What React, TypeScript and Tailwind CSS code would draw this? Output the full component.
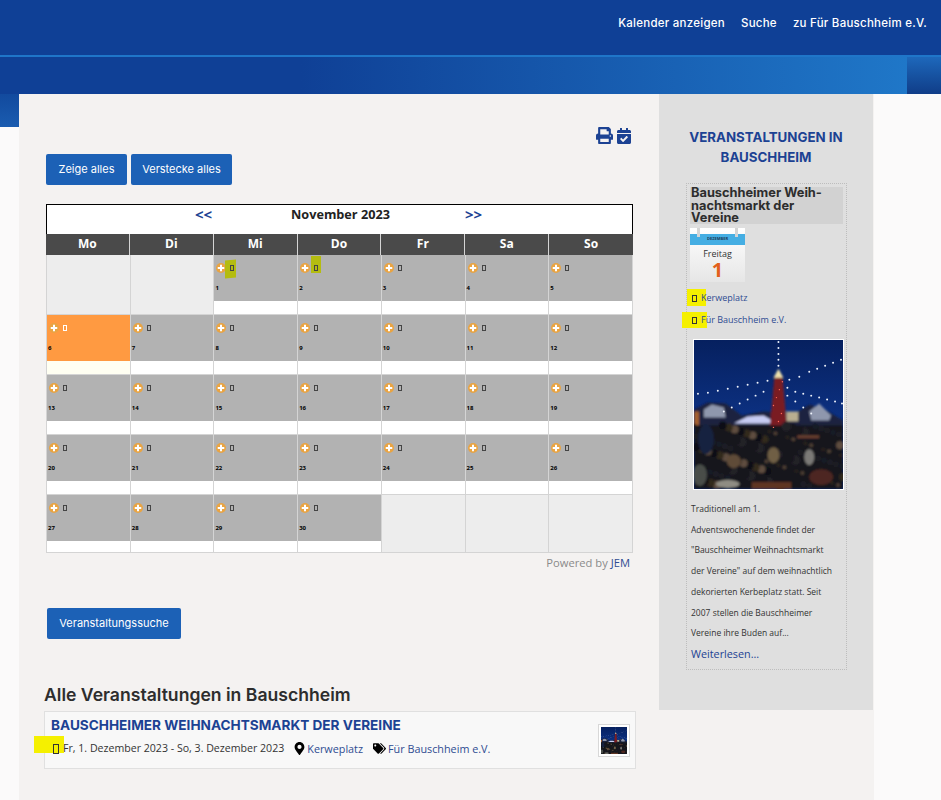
import { FaPrint, FaCalendarCheck, FaMapMarkerAlt, FaTags } from 'react-icons/fa';

const days = ['Mo', 'Di', 'Mi', 'Do', 'Fr', 'Sa', 'So'];
const head = '[font-family:Inter,sans-serif]';
const body = '[font-family:"Open_Sans",sans-serif]';

function Tofu({ className = 'border-black' }: { className?: string }) {
  return <span className={`inline-block border ${className}`} />;
}

function PlusIcon() {
  return (
    <svg viewBox="0 0 20 20" className="h-[10px] w-[10px] shrink-0">
      <circle cx="10" cy="10" r="10" fill="#e9a443" />
      <path d="M10 3.5v13M3.5 10h13" stroke="#fff" strokeWidth="4" />
    </svg>
  );
}

function DayCell({ day, today }: { day?: number; today?: boolean }) {
  if (!day) return <div className="border-r border-b border-[#d4d4d4] bg-[#ededed]" />;
  return (
    <div className={`flex flex-col border-r border-b border-[#d4d4d4] ${today ? 'bg-[#fffff2]' : 'bg-white'}`}>
      <div className={`h-[46px] pl-[1px] ${today ? 'bg-[#ff9a41]' : 'bg-[#b2b2b2]'}`}>
        <div className="flex h-[24px] items-center gap-[4px] pl-[1px] pt-[1px]">
          <PlusIcon />
          <span className="relative flex">
            {day === 1 && <span className="absolute -left-[5px] -top-[5px] h-[18px] w-[11px] -skew-y-6 bg-[#b4bc10]" />}
            {day === 2 && <span className="absolute -left-[3px] -top-[9px] h-[17px] w-[10px] bg-[#b4bc10]" />}
            <Tofu className={`relative h-[6px] w-[4px] ${today ? 'border-white' : 'border-[#444]'}`} />
          </span>
        </div>
        <div className="pt-[5px] text-[6px] leading-[8px] font-bold text-black">{day}</div>
      </div>
    </div>
  );
}

function Calendar() {
  const cells: (number | undefined)[] = [undefined, undefined];
  for (let d = 1; d <= 30; d++) cells.push(d);
  while (cells.length < 35) cells.push(undefined);
  return (
    <div className={`w-[587px] ${body}`}>
      <div className="relative h-[30px] border-x border-t border-black bg-white">
        <a className="absolute left-[148px] top-0 text-[15px] leading-[18px] font-bold text-[#1c4293]">&lt;&lt;</a>
        <div className="absolute left-[244px] top-0 text-[12.7px] leading-[18px] font-bold text-[#222]">November 2023</div>
        <a className="absolute left-[418px] top-0 text-[15px] leading-[18px] font-bold text-[#1c4293]">&gt;&gt;</a>
      </div>
      <div className="grid grid-cols-7">
        {days.map((d) => (
          <div key={d} className="h-[21px] border-r border-[#d4d4d4] bg-[#4a4a4a] text-center text-[12px] leading-[20px] font-bold text-white last:border-r-0">
            {d}
          </div>
        ))}
      </div>
      <div className="grid grid-cols-7 grid-rows-[60px_60px_60px_60px_58px] border-l border-[#d4d4d4]">
        {cells.map((d, i) => (
          <DayCell key={i} day={d} today={d === 6} />
        ))}
      </div>
    </div>
  );
}

const crowdColors = ['#14151b', '#1b1c24', '#101116', '#232028', '#2a241f', '#171a26', '#33291f', '#14151b', '#4f4034', '#1d1e26', '#5e4d3f', '#15161c'];

// small heads and coats for the market photo, spread with fixed steps
const crowd = Array.from({ length: 110 }, (_, i) => ({
  cx: (i * 37) % 151,
  cy: 86 + ((i * 23) % 62),
  r: 2 + (i % 4),
  fill: crowdColors[i % crowdColors.length],
}));

const lights: [number, number][] = [
  [85, 2], [85, 8], [85, 14], [85, 20], [85, 26],
  [4, 54], [14, 53], [24, 51], [34, 49], [44, 47], [54, 45], [64, 43], [74, 41],
  [96, 40], [106, 37], [116, 32], [124, 29], [132, 26], [140, 23], [148, 20],
  [30, 72], [38, 68], [46, 64], [54, 60], [62, 56], [70, 52],
  [94, 48], [102, 52], [110, 54], [118, 56], [126, 58], [134, 60], [142, 62], [149, 64],
  [94, 56], [102, 62], [110, 68], [118, 74],
];

function MarketPhoto({ className }: { className: string }) {
  return (
    <svg viewBox="0 0 150 150" preserveAspectRatio="none" className={className}>
      <defs>
        <linearGradient id="sky" x1="0" y1="0" x2="0" y2="1">
          <stop offset="0" stopColor="#06205f" />
          <stop offset="0.5" stopColor="#0c3080" />
        </linearGradient>
        <filter id="soft" x="-5%" y="-5%" width="110%" height="110%">
          <feGaussianBlur stdDeviation="1.1" />
        </filter>
      </defs>
      <rect width="150" height="150" fill="url(#sky)" />
      <g filter="url(#soft)">
        <path d="M0 70l14-7 18 1 16 12 22-4 32 2 14-9 14 4 20 12v14H0z" fill="#1c2440" />
        <path d="M10 70l8-5 12 3 2 10H10zM116 72l10-8 12 12-2 5h-18z" fill="#8f97ad" />
        <path d="M40 84l14-7 16-1 14 8z" fill="#c6cbf2" />
        <path d="M93 72h12v10H93z" fill="#b8ae90" />
        <path d="M0 72h5v14H0z" fill="#a5602f" />
        <path d="M76 92l5-56h8l5 56z" fill="#7a1d24" />
        <path d="M80 38l5-9 5 9z" fill="#efe3ad" />
        <rect y="86" width="150" height="64" fill="#15161c" />
        {crowd.map((c, i) => (
          <circle key={i} cx={c.cx} cy={c.cy} r={c.r} fill={c.fill} />
        ))}
        <rect x="58" y="143" width="40" height="7" fill="#5e3424" />
        <rect x="104" y="96" width="22" height="3" fill="#6a4030" />
        <ellipse cx="40" cy="122" rx="7" ry="7" fill="#5f4b39" />
        <ellipse cx="80" cy="116" rx="6" ry="8" fill="#6f5e45" />
        <ellipse cx="116" cy="118" rx="5" ry="8" fill="#7c7a77" />
        <ellipse cx="128" cy="138" rx="12" ry="8" fill="#4e2820" />
        <ellipse cx="6" cy="136" rx="7" ry="11" fill="#494e49" />
        <ellipse cx="34" cy="145" rx="12" ry="4" fill="#8f8d83" />
        <ellipse cx="12" cy="100" rx="8" ry="15" fill="#14223f" />
      </g>
      {lights.map(([cx, cy], i) => (
        <circle key={i} cx={cx} cy={cy} r="1" fill="#eef2fb" />
      ))}
      {[42, 50, 58, 66, 74, 82, 88].map((y) => (
        <circle key={y} cx={80 + (y % 11)} cy={y} r="0.7" fill="#ff6a5a" />
      ))}
    </svg>
  );
}

function DateBadge() {
  return (
    <div className={`relative h-[54px] w-[55px] bg-gradient-to-b from-white to-[#e6e6e6] pt-[6px] text-center ${body}`}>
      <div className="h-[11px] bg-[#45aee3] pt-[2px] text-[4px] leading-[6px] font-bold text-[#1b3a57]">DEZEMBER</div>
      <span className="absolute left-[7px] top-0 h-[9px] w-[3px] bg-[#d5d5d5]" />
      <span className="absolute right-[7px] top-0 h-[9px] w-[3px] bg-[#d5d5d5]" />
      <div className="pt-[3px] text-[9px] leading-[12px] text-[#333]">Freitag</div>
      <div className="text-[20px] leading-[20px] font-bold text-[#e2601b]">1</div>
    </div>
  );
}

function Sidebar() {
  return (
    <aside className={`h-[616px] w-[214px] shrink-0 bg-[#dfdfdf] px-[27px] ${body}`}>
      <h3 className={`-mx-[4px] pt-[33px] text-center text-[13.3px] leading-[20px] font-bold text-[#1c4293] ${head}`}>
        VERANSTALTUNGEN IN BAUSCHHEIM
      </h3>
      <div className="mt-[16px] h-[487px] w-[161px] border border-dotted border-[#bdbdbd] px-[3px] pt-[3px]">
        <div className={`h-[37px] bg-[#d2d2d2] pl-[1px] text-[12.8px] leading-[12.5px] font-bold text-[#2d2d2d] ${head}`}>
          Bauschheimer Weih-<br />nachtsmarkt der<br />Vereine
        </div>
        <div className="pt-[4px]"><DateBadge /></div>
        <div className="mt-[9px] flex h-[14px] items-center pl-[2px] text-[9px] text-[#2f4c92]">
          <span className="relative mr-[4px] inline-flex">
            <span className="absolute -left-[5px] -top-[6px] h-[17px] w-[19px] bg-[#f5f000]" />
            <Tofu className="relative h-[7px] w-[5px] border-[#333]" />
          </span>
          <span className="relative">Kerweplatz</span>
        </div>
        <div className="mt-[8px] flex h-[14px] items-center pl-[2px] text-[9px] text-[#2f4c92]">
          <span className="relative mr-[4px] inline-flex">
            <span className="absolute -left-[10px] -top-[5px] h-[16px] w-[25px] bg-[#f5f000]" />
            <Tofu className="relative h-[7px] w-[5px] border-[#333]" />
          </span>
          <span className="relative">Für Bauschheim e.V.</span>
        </div>
        <div className="ml-[3px] mt-[12px] w-[151px] bg-white p-[1px]">
          <MarketPhoto className="block h-[149px] w-[149px]" />
        </div>
        <p className="mt-[9px] pl-[1px] text-[8.5px] leading-[20.7px] text-[#333]">
          Traditionell am 1.<br />
          Adventswochenende findet der<br />
          "Bauschheimer Weihnachtsmarkt<br />
          der Vereine" auf dem weihnachtlich<br />
          dekorierten Kerbeplatz statt. Seit<br />
          2007 stellen die Bauschheimer<br />
          Vereine ihre Buden auf...
        </p>
        <a className="mt-[2px] block pl-[1px] text-[10.8px] leading-[16px] text-[#1c4293]">Weiterlesen...</a>
      </div>
    </aside>
  );
}

export default function App() {
  return (
    <div className={`relative min-h-[800px] overflow-hidden bg-[#fbfafa] ${body}`}>
      <header className={`flex h-[55px] items-start justify-end gap-[16px] bg-[#0f4096] pr-[14px] pt-[16px] text-[11.5px] leading-[14px] font-medium tracking-[0.25px] text-white ${head}`}>
        <span>Kalender anzeigen</span>
        <span>Suche</span>
        <span>zu Für Bauschheim e.V.</span>
      </header>
      <div className="relative h-[39px] border-t-2 border-[#1f76c9] bg-[linear-gradient(90deg,#0f4096_0%,#0f4096_32%,#1f77c8_96.4%)]">
        <div className="absolute right-0 top-0 h-full w-[34px] bg-gradient-to-b from-[#1e68bb] to-[#103d88]" />
      </div>
      <div className="absolute left-0 top-[94px] h-[33px] w-[19px] bg-gradient-to-b from-[#124a9e] to-[#1a5cb0]" />
      <div className="absolute left-[873px] top-[94px] h-[33px] w-px bg-[#7fa6dc]" />

      <main className="relative ml-[19px] flex w-[855px] items-start bg-[#f4f2f1]">
        <div className="h-[706px] w-[640px] pl-[27px]">
          <div className="flex items-center justify-end gap-[3px] pr-[27px] pt-[33px] text-[17px] text-[#1c4293]">
            <FaPrint />
            <FaCalendarCheck className="text-[16px]" />
          </div>
          <div className="mt-[10px] flex gap-[4px]">
            <button className={`h-[31px] w-[81px] rounded-[2px] bg-[#1c61b6] text-[11px] text-white ${head}`}>Zeige alles</button>
            <button className={`h-[31px] w-[101px] rounded-[2px] bg-[#1c61b6] text-[11px] text-white ${head}`}>Verstecke alles</button>
          </div>
          <div className="mt-[19px]"><Calendar /></div>
          <div className="w-[587px] pr-[3px] pt-[2px] text-right text-[11.2px] leading-[15px] text-[#8a8a8a]">
            Powered by <a className="text-[#2f4c92]">JEM</a>
          </div>
          <button className={`ml-[1px] mt-[38px] h-[31px] w-[134px] rounded-[2px] bg-[#1c61b6] text-[11px] text-white ${head}`}>Veranstaltungssuche</button>
          <h2 className={`-ml-[2px] mt-[46px] text-[17.6px] leading-[20px] font-semibold text-[#2d2d2d] ${head}`}>Alle Veranstaltungen in Bauschheim</h2>
          <div className="-ml-[2px] mt-[6px] flex h-[58px] w-[592px] items-start justify-between border border-[#e0e0e0] bg-[#f8f8f8] pl-[6px] pr-[5px]">
            <div>
              <div className={`pt-[6px] text-[13.6px] leading-[15px] font-bold text-[#1c4293] ${head}`}>BAUSCHHEIMER WEIHNACHTSMARKT DER VEREINE</div>
              <div className="flex items-center pt-[8px] text-[10.8px] leading-[15px] text-[#333]">
                <span className="relative ml-[2px] mr-[4px] inline-flex">
                  <span className="absolute -left-[19px] -top-[8px] h-[17px] w-[30px] bg-[#f5f000]" />
                  <Tofu className="relative h-[10px] w-[6px] border-[#333]" />
                </span>
                <span className="relative text-[10.6px]">Fr, 1. Dezember 2023 - So, 3. Dezember 2023</span>
                <FaMapMarkerAlt className="ml-[9px] mr-[1px] text-[13px] text-black" />
                <a className="text-[#2f4c92]">Kerweplatz</a>
                <FaTags className="ml-[10px] mr-[2px] text-[13px] text-black" />
                <a className="text-[#2f4c92]">Für Bauschheim e.V.</a>
              </div>
            </div>
            <div className="mt-[12px] border border-[#d8d8d8] bg-white p-[2px]">
              <MarketPhoto className="block h-[27px] w-[26px]" />
            </div>
          </div>
        </div>
        <Sidebar />
      </main>
    </div>
  );
}
